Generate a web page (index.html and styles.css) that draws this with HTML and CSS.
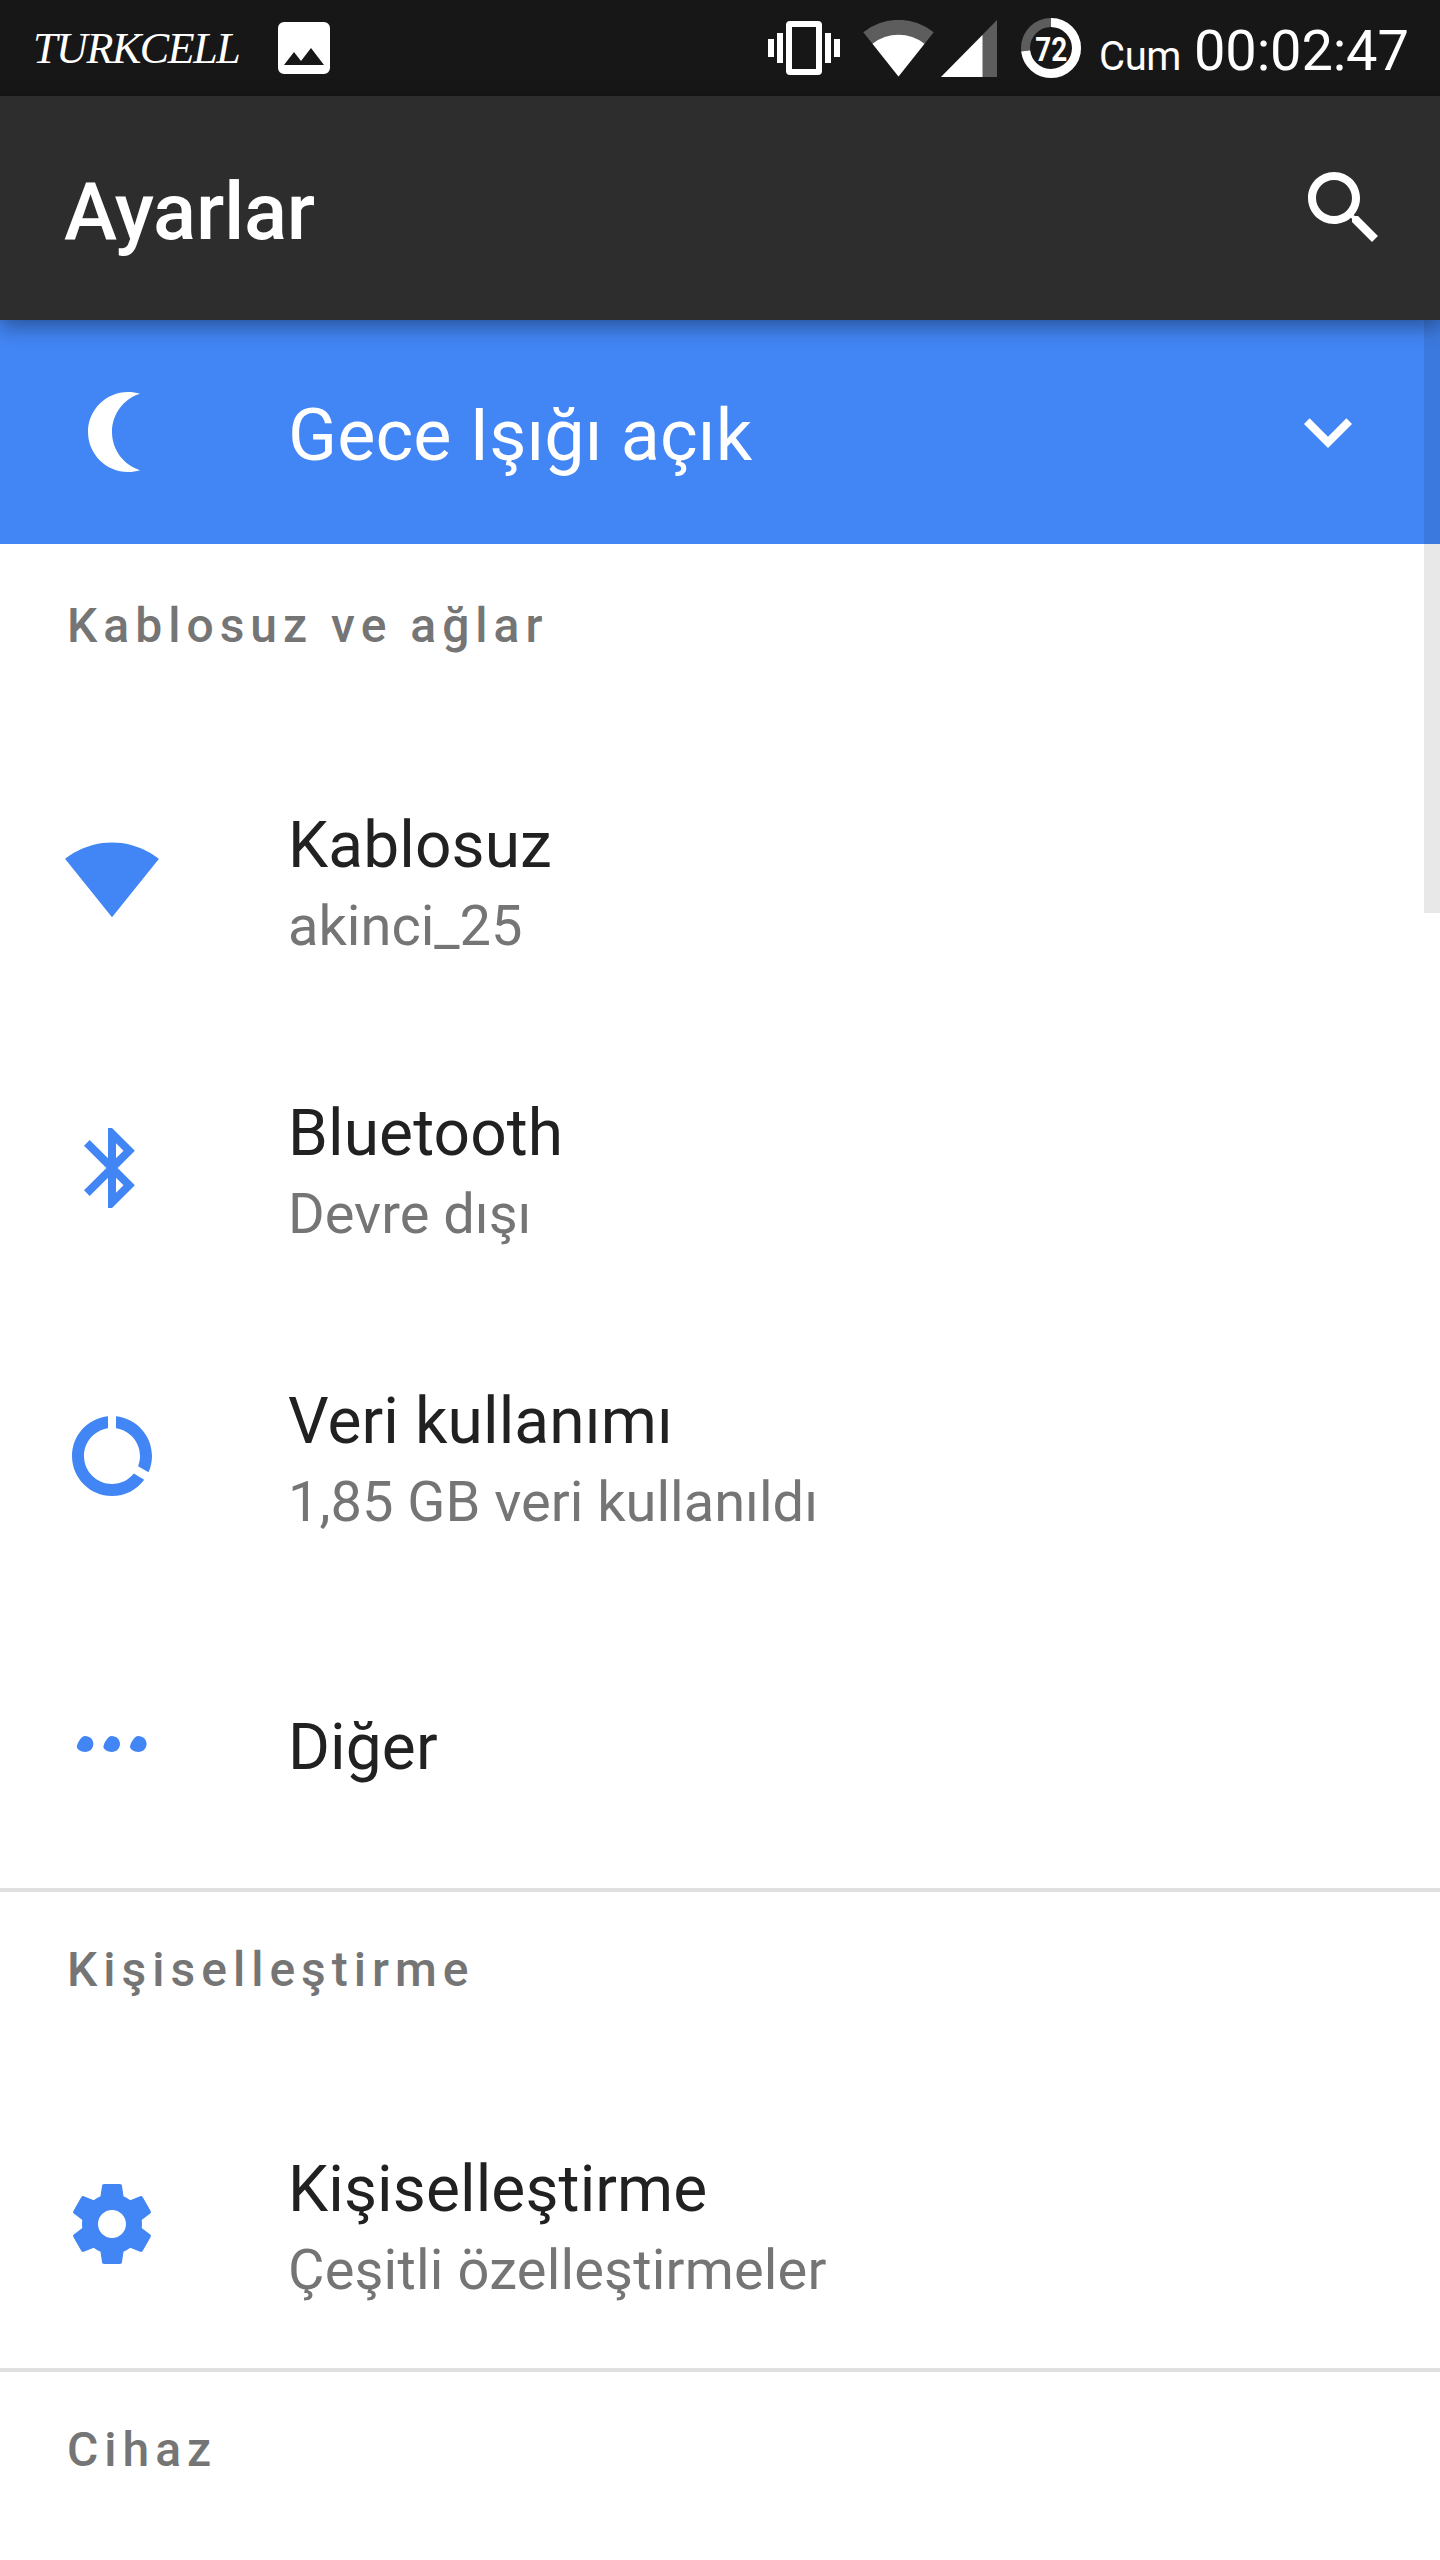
FILE: index.html
```html
<!DOCTYPE html>
<html lang="tr">
<head>
<meta charset="utf-8">
<title>Ayarlar</title>
<link rel="stylesheet" href="styles.css">
</head>
<body>
<header class="status">
  <span class="carrier">TURKCELL</span>
  <svg class="st-photo" width="52" height="52" viewBox="0 0 52 52"><path fill-rule="evenodd" d="M6 0H46a6 6 0 0 1 6 6V46a6 6 0 0 1-6 6H6a6 6 0 0 1-6-6V6a6 6 0 0 1 6-6zM6 43H46L33 26 23 39 16 30z"/></svg>
  <span class="spacer"></span>
  <svg class="st-vibrate" width="72" height="54" viewBox="0 0 72 54"><path fill-rule="evenodd" d="M0 18h6v18H0zM9 12h6v30H9zM57 12h6v30h-6zM66 18h6v18h-6zM22 0H50a4 4 0 0 1 4 4V50a4 4 0 0 1-4 4H22a4 4 0 0 1-4-4V4a4 4 0 0 1 4-4zM24 6V48H48V6z"/></svg>
  <svg class="st-wifi" width="71" height="57" viewBox="0 0 71 57"><path class="dim" d="M35.500 56.500L.3 12.300A56 56 0 0 1 70.700 12.300z"/><path d="M35.500 56.500L9.500 23.700A42 42 0 0 1 61.500 23.700z"/></svg>
  <svg class="st-cell" width="56" height="57" viewBox="0 0 56 57"><path class="dim" d="M0 57L56 0V57z"/><path d="M0 57L41.500 15V57z"/></svg>
  <svg class="st-battery" width="60" height="60" viewBox="0 0 60 60"><circle class="ring dim-ring" cx="30" cy="30" r="25.500"/><circle class="ring" cx="30" cy="30" r="25.500" pathLength="100" stroke-dasharray="73 27" transform="rotate(-90 30 30)"/><text x="30.300" y="43" text-anchor="middle" textLength="32" lengthAdjust="spacingAndGlyphs">72</text></svg>
  <span class="day">Cum</span>
  <span class="clock">00:02:47</span>
</header>
<div class="appbar">
  <h1>Ayarlar</h1>
  <svg class="icon" viewBox="0 0 24 24"><path d="M15.500 14h-.79l-.28-.27C15.410 12.590 16 11.110 16 9.500 16 5.910 13.090 3 9.500 3S3 5.910 3 9.500 5.910 16 9.500 16c1.610 0 3.090-.59 4.230-1.570l.27.28v.79l5 4.990L20.490 19l-4.990-5zm-6 0C7.010 14 5 11.990 5 9.500S7.010 5 9.500 5 14 7.010 14 9.500 11.990 14 9.500 14z"/></svg>
</div>
<main class="content">
  <div class="banner">
    <svg class="icon" viewBox="0 0 24 24"><path d="M16 2c1.050 0 2.050.16 3 .46-4.060 1.270-7 5.060-7 9.540s2.940 8.270 7 9.540c-.95.3-1.950.46-3 .46-5.520 0-10-4.480-10-10S10.480 2 16 2z"/></svg>
    <span class="banner-text">Gece Işığı açık</span>
    <svg class="icon" viewBox="0 0 24 24"><path d="M16.590 8.590L12 13.170 7.410 8.590 6 10l6 6 6-6z"/></svg>
  </div>
  <section>
    <h2>Kablosuz ve ağlar</h2>
    <div class="item">
      <svg class="icon" viewBox="0 0 24 24"><path d="M12 21.300L23.750 6.700C23.100 6.200 18.700 2.600 12 2.600S.9 6.200.25 6.700z"/></svg>
      <div class="label"><div class="title">Kablosuz</div><div class="summary">akinci_25</div></div>
    </div>
    <div class="item">
      <svg class="icon" viewBox="0 0 24 24"><path d="M17.710 7.710L12 2h-1v7.590L6.410 5 5 6.410 10.590 12 5 17.590 6.410 19 11 14.410V22h1l5.710-5.710-4.300-4.290 4.300-4.290zM13 5.830l1.880 1.880L13 9.590V5.830zm1.880 10.460L13 18.170v-3.760l1.880 1.880z"/></svg>
      <div class="label"><div class="title">Bluetooth</div><div class="summary">Devre dışı</div></div>
    </div>
    <div class="item">
      <svg class="icon" viewBox="0 0 24 24"><path d="M13 2.050v3.030c3.390.49 6 3.390 6 6.920 0 .9-.18 1.750-.48 2.540l2.600 1.530c.56-1.240.88-2.620.88-4.070 0-5.180-3.950-9.450-9-9.950zM12 19c-3.870 0-7-3.130-7-7 0-3.530 2.610-6.430 6-6.920V2.050c-5.060.5-9 4.760-9 9.950 0 5.520 4.470 10 9.990 10 3.310 0 6.240-1.610 8.060-4.090l-2.600-1.530C16.170 17.980 14.210 19 12 19z"/></svg>
      <div class="label"><div class="title">Veri kullanımı</div><div class="summary">1,85 GB veri kullanıldı</div></div>
    </div>
    <div class="item">
      <svg class="icon" viewBox="0 0 24 24"><path id="dot" d="M5.300 10c1.100 0 2.050.9 2.050 2s-.95 2-2.050 2-2.100-.7-2.100-1.300S4.200 10 5.300 10z"/><use href="#dot" x="6.650"/><use href="#dot" x="13.300"/></svg>
      <div class="label"><div class="title">Diğer</div></div>
    </div>
  </section>
  <section class="ruled">
    <h2>Kişiselleştirme</h2>
    <div class="item">
      <svg class="icon" viewBox="0 0 24 24"><path d="M19.430 12.980c.04-.32.07-.64.07-.98s-.03-.66-.07-.98l2.110-1.650c.19-.15.24-.42.12-.64l-2-3.460c-.12-.22-.39-.3-.61-.22l-2.490 1c-.52-.4-1.080-.73-1.690-.98l-.38-2.650C14.460 2.180 14.250 2 14 2h-4c-.25 0-.46.18-.49.42l-.38 2.650c-.61.25-1.170.59-1.690.98l-2.490-1c-.23-.09-.49 0-.61.22l-2 3.460c-.13.22-.07.49.12.64l2.110 1.650c-.04.32-.07.65-.07.98s.03.66.07.98l-2.110 1.650c-.19.15-.24.42-.12.64l2 3.460c.12.22.39.3.61.22l2.490-1c.52.4 1.080.73 1.690.98l.38 2.650c.03.24.24.42.49.42h4c.25 0 .46-.18.49-.42l.38-2.650c.61-.25 1.170-.59 1.690-.98l2.490 1c.23.09.49 0 .61-.22l2-3.460c.12-.22.07-.49-.12-.64l-2.110-1.650zM12 15.500c-1.930 0-3.500-1.570-3.500-3.500s1.570-3.500 3.500-3.500 3.500 1.570 3.500 3.500-1.570 3.500-3.500 3.500z"/></svg>
      <div class="label"><div class="title">Kişiselleştirme</div><div class="summary loose">Çeşitli özelleştirmeler</div></div>
    </div>
  </section>
  <section class="ruled">
    <h2>Cihaz</h2>
  </section>
  <div class="scrollbar"></div>
</main>
</body>
</html>
```
FILE: styles.css
```css
* { box-sizing: border-box; }
body {
  margin: 0;
  width: 1440px;
  height: 2560px;
  overflow: hidden;
  display: flex;
  flex-direction: column;
  background: #fff;
  color: #212121;
  font-family: Roboto, sans-serif;
}
h1, h2 { margin: 0; font-weight: 500; }
svg { display: block; flex: none; fill: currentColor; }
.icon { width: 96px; height: 96px; }

.status {
  height: 96px;
  flex: none;
  display: flex;
  align-items: flex-start;
  background: #171717;
  color: #fff;
  white-space: nowrap;
}
.carrier {
  margin: 23px 0 0 33px;
  width: 245px;
  font: italic 44px/52px "Liberation Serif", serif;
  letter-spacing: -1.400px;
}
.st-photo { margin-top: 22px; }
.spacer { flex: 1; }
.st-vibrate { margin: 21px 23px 0 0; }
.st-wifi { margin: 20px 7px 0 0; }
.st-cell { margin: 20px 24px 0 0; }
.st-battery { margin: 18px 18px 0 0; }
.dim { fill: #5d5d5d; }
.ring { fill: none; stroke: #fff; stroke-width: 9; }
.dim-ring { stroke: #5d5d5d; }
.st-battery text { font: bold 34px Roboto, sans-serif; }
.day { width: 95px; margin-top: 33px; font-size: 40px; line-height: 48px; letter-spacing: -.4px; }
.clock { width: 246px; margin-top: 18px; font-size: 56px; line-height: 66px; letter-spacing: -.15px; }

.appbar {
  position: relative;
  z-index: 1;
  height: 224px;
  flex: none;
  display: flex;
  align-items: center;
  justify-content: space-between;
  padding: 0 48px 0 64px;
  background: #2d2d2d;
  color: #fff;
  box-shadow: 0 6px 20px rgba(0, 0, 0, .4);
}
.appbar h1 { padding-top: 8px; font-size: 80px; line-height: 94px; letter-spacing: -.3px; }

.content { position: relative; flex: 1; }
.banner {
  height: 224px;
  display: flex;
  align-items: center;
  padding: 0 64px;
  background: #4285f4;
  color: #fff;
}
.banner-text { flex: 1; margin-left: 128px; padding-top: 7px; font-size: 72px; line-height: 84px; letter-spacing: .1px; }
h2 {
  height: 192px;
  padding: 54px 67px 0;
  color: #757575;
  font-size: 48px;
  line-height: 56px;
  letter-spacing: 6px;
}
.ruled { box-shadow: inset 0 4px #e0e0e0; }
.item { height: 288px; display: flex; align-items: center; padding: 0 64px; color: #4285f4; }
.label { margin-left: 128px; padding-top: 7px; white-space: nowrap; }
.title { color: #212121; font-size: 64px; line-height: 76px; letter-spacing: .12px; }
.summary { margin-top: 9px; color: #757575; font-size: 56px; line-height: 66px; }
.loose { letter-spacing: .18px; }
.scrollbar { position: absolute; top: 0; right: 0; width: 16px; height: 593px; background: rgba(0, 0, 0, .09); }
```
